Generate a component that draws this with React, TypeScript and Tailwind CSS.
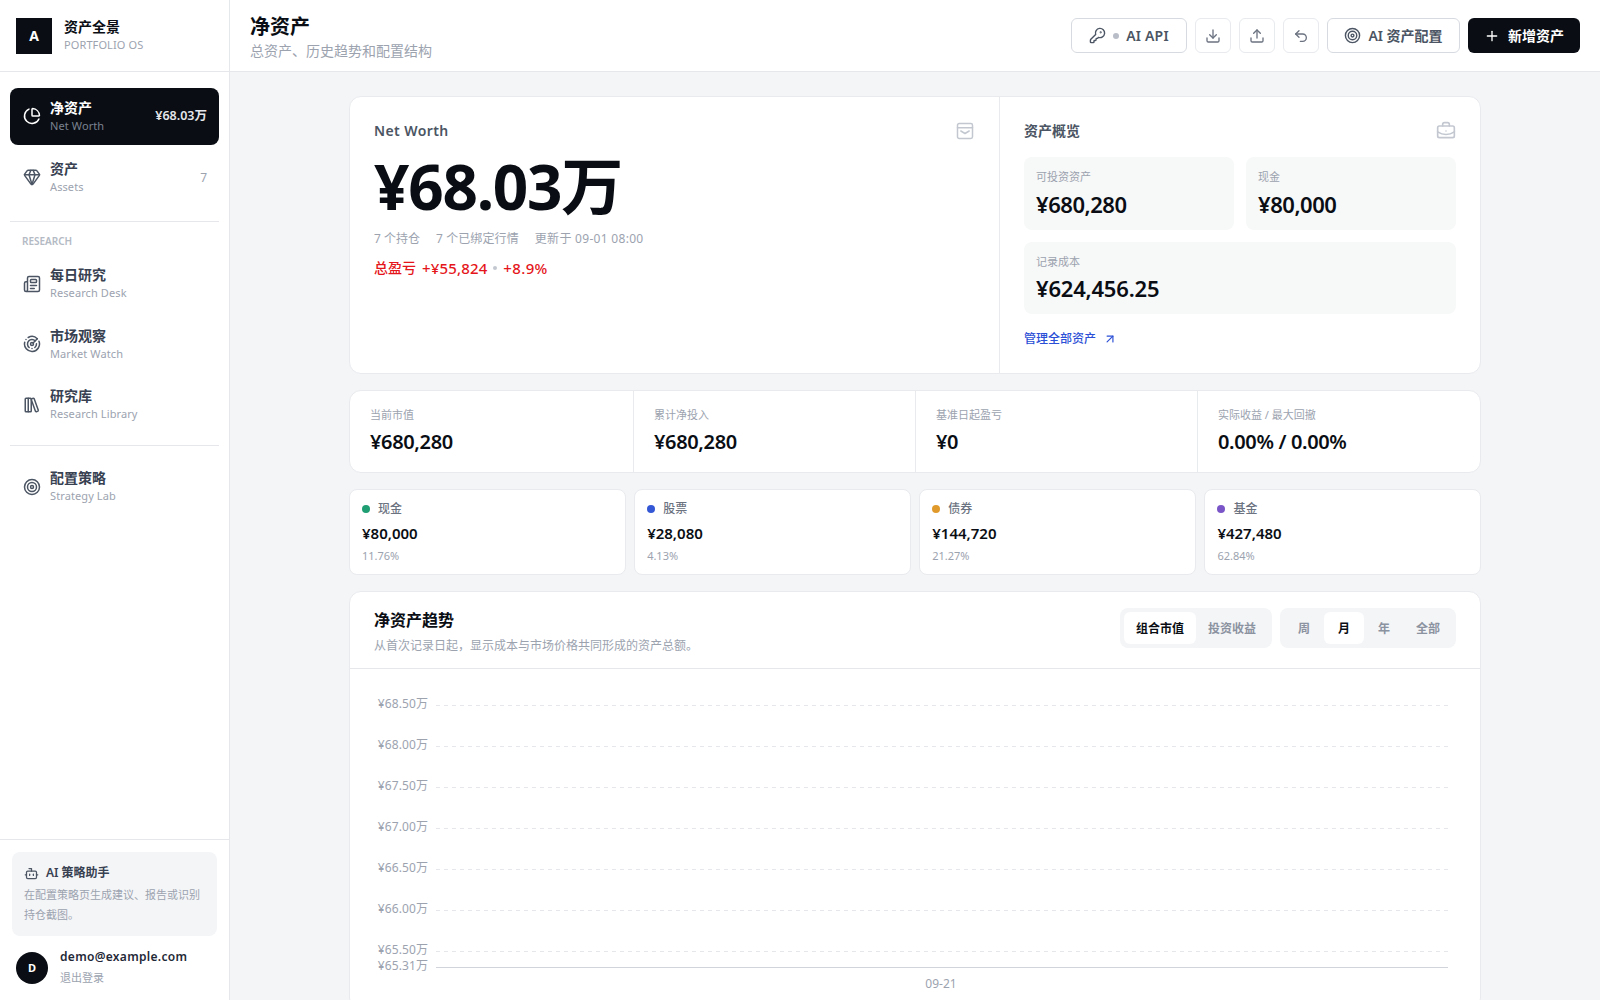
import {
  ArrowUpRight,
  Bot,
  BriefcaseBusiness,
  ChartPie,
  Download,
  Gem,
  KeyRound,
  LibraryBig,
  Newspaper,
  Plus,
  Radar,
  Target,
  Undo2,
  Upload,
} from 'lucide-react';
import type { ReactNode } from 'react';

const font = 'font-["Noto_Sans","Noto_Sans_CJK_SC",sans-serif]';

function NavRow({
  icon,
  title,
  sub,
  right,
  active,
}: {
  icon: ReactNode;
  title: string;
  sub: string;
  right?: string;
  active?: boolean;
}) {
  return (
    <div
      className={`flex h-[57px] items-center rounded-lg pl-[12.5px] pr-3 ${active ? 'bg-[#0a0e14] text-white' : 'text-[#4b5563]'}`}
    >
      <span className="-mt-px flex w-[18px] justify-center">{icon}</span>
      <div className="ml-[9.5px] flex-1">
        <div className={`text-sm leading-[18px] font-semibold ${active ? 'text-white' : 'text-[#374151]'}`}>{title}</div>
        <div className={`text-[11px] leading-[18px] tracking-[0.1px] ${active ? 'text-[#7b8190]' : 'text-[#9ca3af]'}`}>{sub}</div>
      </div>
      {right && (
        <span className={active ? 'text-[12.5px] font-semibold text-[#e5e7eb]' : 'text-xs text-[#9ca3af]'}>{right}</span>
      )}
    </div>
  );
}

function Sidebar() {
  return (
    <aside className="flex h-full w-[230px] shrink-0 flex-col border-r border-[#e5e7eb] bg-white">
      <div className="flex h-[72px] shrink-0 items-center border-b border-[#e5e7eb] pl-4">
        <div className="flex h-9 w-9 items-center justify-center bg-[#0a0e14] text-sm font-bold text-white">A</div>
        <div className="ml-3 pt-px">
          <div className="text-sm leading-[18px] font-semibold text-[#0a0e14]">资产全景</div>
          <div className="text-[11px] leading-[18px] tracking-[0.1px] text-[#9ca3af]">PORTFOLIO OS</div>
        </div>
      </div>
      <nav className="flex flex-1 flex-col px-[10px] pt-4">
        <div className="flex flex-col gap-1">
          <NavRow active icon={<ChartPie size={18} />} title="净资产" sub="Net Worth" right="¥68.03万" />
          <NavRow icon={<Gem size={18} />} title="资产" sub="Assets" right="7" />
        </div>
        <div className="mt-[14.5px] border-t border-[#e5e7eb]" />
        <div className="mt-[11px] mb-[7px] pl-3 text-[10px] leading-4 font-semibold text-[#b4bac4]">RESEARCH</div>
        <div className="flex flex-col gap-[3.5px]">
          <NavRow icon={<Newspaper size={18} />} title="每日研究" sub="Research Desk" />
          <NavRow icon={<Radar size={18} />} title="市场观察" sub="Market Watch" />
          <NavRow icon={<LibraryBig size={18} />} title="研究库" sub="Research Library" />
        </div>
        <div className="mt-[11px] border-t border-[#e5e7eb]" />
        <div className="mt-[13px]">
          <NavRow icon={<Target size={18} />} title="配置策略" sub="Strategy Lab" />
        </div>
      </nav>
      <div className="border-t border-[#e5e7eb] px-3 pt-3 pb-4">
        <div className="h-[84px] rounded-lg bg-[#f4f5f7] px-3 pt-3">
          <div className="flex items-center gap-[7px] text-xs leading-[18px] font-semibold text-[#374151]">
            <Bot size={15} className="text-[#4b5563]" />
            AI 策略助手
          </div>
          <p className="mt-[3px] text-[11px] leading-5 text-[#9ca3af]">在配置策略页生成建议、报告或识别持仓截图。</p>
        </div>
        <div className="mt-4 flex h-8 items-center pl-1">
          <div className="flex h-8 w-8 items-center justify-center rounded-full bg-[#0a0e14] text-[11px] font-bold text-white">D</div>
          <div className="-mt-[3px] ml-3">
            <div className="text-xs leading-[18px] font-semibold tracking-[0.3px] text-[#1f2937]">demo@example.com</div>
            <div className="mt-1 text-[11px] leading-4 text-[#9ca3af]">退出登录</div>
          </div>
        </div>
      </div>
    </aside>
  );
}

function Header() {
  const outline = 'flex h-[35px] items-center rounded-md border border-[#d7dbe1] bg-white text-sm font-semibold text-[#4b5563]';
  const iconBtn = 'flex h-[35px] w-9 items-center justify-center rounded-md border border-[#e8eaee] bg-white text-[#6b7280]';
  return (
    <header className="flex h-[72px] shrink-0 items-center justify-between border-b border-[#e5e7eb] bg-white pr-5 pl-5">
      <div className="pt-[2px]">
        <h1 className="text-xl leading-7 font-semibold text-[#0a0e14]">净资产</h1>
        <p className="text-sm leading-5 text-[#9ca3af]">总资产、历史趋势和配置结构</p>
      </div>
      <div className="flex items-center gap-2">
        <button className={`${outline} w-[116px] justify-center gap-[7px] tracking-[0.2px]`}>
          <KeyRound size={17} />
          <span className="h-[6px] w-[6px] rounded-full bg-[#b8bdc7]" />
          AI API
        </button>
        <button className={iconBtn}><Download size={16} /></button>
        <button className={iconBtn}><Upload size={16} /></button>
        <button className={iconBtn}><Undo2 size={16} /></button>
        <button className={`${outline} w-[133px] justify-center gap-[7px]`}>
          <Target size={17} />
          AI 资产配置
        </button>
        <button className="flex h-[35px] w-[112px] items-center justify-center gap-2 rounded-md bg-[#0a0e14] text-sm font-semibold text-white">
          <Plus size={16} />
          新增资产
        </button>
      </div>
    </header>
  );
}

function Tile({ label, value, tight }: { label: string; value: string; tight?: boolean }) {
  return (
    <div className={`rounded-lg bg-[#f7f8f8] px-3 pt-[11px] ${tight ? 'h-[72px]' : 'h-[73px]'}`}>
      <div className="text-[11px] leading-[18px] text-[#9ca3af]">{label}</div>
      <div className={`${tight ? 'mt-[2px] tracking-[-0.2px]' : 'mt-[3px] tracking-[-0.45px]'} text-[22px] leading-[30px] font-semibold text-[#0a0e14]`}>{value}</div>
    </div>
  );
}

function Hero() {
  return (
    <section className="grid h-[278px] grid-cols-[650px_1fr] rounded-xl border border-[#e8eaee] bg-white">
      <div className="border-r border-[#e8eaee] px-6 pt-6">
        <div className="flex items-center justify-between">
          <span className="text-sm leading-5 font-semibold tracking-[0.4px] text-[#4b5563]">Net Worth</span>
          <svg width="20" height="20" viewBox="0 0 24 24" fill="none" stroke="#c3c8d0" strokeWidth="1.8" strokeLinejoin="round" strokeLinecap="round">
            <rect x="3" y="3" width="18" height="18" rx="2" />
            <path d="M3 8h18" />
            <path d="M7 12l5 3 5-3" />
          </svg>
        </div>
        <div className="mt-[10px] text-[62px] leading-[70px] font-bold tracking-[-0.02em] text-[#0a0e14]">¥68.03万</div>
        <div className="mt-2 flex gap-4 text-xs leading-5 text-[#9ca3af]">
          <span>7 个持仓</span>
          <span className="tracking-[0.1px]">7 个已绑定行情</span>
          <span className="tracking-[0.3px]">更新于 09-01 08:00</span>
        </div>
        <div className="mt-[9px] flex items-center text-sm leading-5 font-medium text-[#e5161b]">
          <span>总盈亏</span>
          <span className="ml-[6px] text-[15px] tracking-[0.15px]">+¥55,824</span>
          <span className="mx-[6px] h-1 w-1 rounded-full bg-[#c3c8d0]" />
          <span className="text-[15px] tracking-[0.35px]">+8.9%</span>
        </div>
      </div>
      <div className="px-6 pt-6">
        <div className="flex items-center justify-between">
          <span className="text-sm leading-5 font-semibold text-[#4b5563]">资产概览</span>
          <BriefcaseBusiness size={20} className="text-[#c3c8d0]" />
        </div>
        <div className="mt-4 grid grid-cols-2 gap-3">
          <Tile label="可投资资产" value="¥680,280" />
          <Tile label="现金" value="¥80,000" />
          <div className="col-span-2">
            <Tile tight label="记录成本" value="¥624,456.25" />
          </div>
        </div>
        <div className="mt-[15px] flex items-center gap-[7px] text-xs leading-5 font-medium text-[#2b4fd6]">
          管理全部资产
          <ArrowUpRight size={14} />
        </div>
      </div>
    </section>
  );
}

const stats = [
  { label: '当前市值', value: '¥680,280' },
  { label: '累计净投入', value: '¥680,280' },
  { label: '基准日起盈亏', value: '¥0' },
  { label: '实际收益 / 最大回撤', value: '0.00% / 0.00%' },
];

const cats = [
  { label: '现金', value: '¥80,000', pct: '11.76%', dot: 'bg-[#1f9d73]' },
  { label: '股票', value: '¥28,080', pct: '4.13%', dot: 'bg-[#3457d5]' },
  { label: '债券', value: '¥144,720', pct: '21.27%', dot: 'bg-[#e09a2b]' },
  { label: '基金', value: '¥427,480', pct: '62.84%', dot: 'bg-[#7a55c7]' },
];

function Segment({ items, active, wide }: { items: string[]; active: string; wide?: boolean }) {
  return (
    <div className="flex h-10 items-center rounded-lg bg-[#f4f5f7] p-1">
      {items.map((item) => (
        <span
          key={item}
          className={`flex h-8 items-center justify-center rounded-md px-3 pt-px text-xs font-semibold ${wide ? '' : 'min-w-10'} ${item === active ? 'bg-white text-[#0a0e14]' : 'text-[#8b92a0]'}`}
        >
          {item}
        </span>
      ))}
    </div>
  );
}

const ticks = [
  { y: 36, label: '¥68.50万' },
  { y: 77, label: '¥68.00万' },
  { y: 118, label: '¥67.50万' },
  { y: 159, label: '¥67.00万' },
  { y: 200, label: '¥66.50万' },
  { y: 241, label: '¥66.00万' },
  { y: 282, label: '¥65.50万' },
];

function Chart() {
  return (
    <svg width="1130" height="340" className="block">
      {ticks.map((t) => (
        <g key={t.label}>
          <line x1="86" x2="1098" y1={t.y + 0.5} y2={t.y + 0.5} stroke="#e5e7eb" strokeDasharray="4 4" />
          <text x="78" y={t.y + 3} textAnchor="end" fontSize="12" letterSpacing="0.1" fill="#9ca3af">{t.label}</text>
        </g>
      ))}
      <line x1="86" x2="1098" y1="298.5" y2="298.5" stroke="#d1d5db" />
      <text x="78" y="301" textAnchor="end" fontSize="12" letterSpacing="0.1" fill="#9ca3af">¥65.31万</text>
      <text x="591" y="319" textAnchor="middle" fontSize="12" fill="#9ca3af">09-21</text>
    </svg>
  );
}

export default function App() {
  return (
    <div className={`flex h-screen overflow-hidden bg-[#f4f5f7] ${font}`}>
      <Sidebar />
      <div className="flex min-w-0 flex-1 flex-col">
        <Header />
        <main className="flex-1 overflow-hidden px-6 pt-6">
          <div className="mx-auto flex max-w-[1132px] flex-col">
            <Hero />
            <section className="mt-4 grid h-[83px] grid-cols-[284px_282px_282px_1fr] divide-x divide-[#e8eaee] rounded-xl border border-[#e8eaee] bg-white">
              {stats.map((s) => (
                <div key={s.label} className="px-5 pt-[15px]">
                  <div className="text-[11px] leading-[18px] text-[#9ca3af]">{s.label}</div>
                  <div className="mt-1 text-xl leading-7 font-semibold tracking-[-0.35px] text-[#0a0e14]">{s.value}</div>
                </div>
              ))}
            </section>
            <section className="mt-4 grid grid-cols-4 gap-[8.5px]">
              {cats.map((c) => (
                <div key={c.label} className="h-[86px] rounded-lg border border-[#e8eaee] bg-white px-3 pt-[9px]">
                  <div className="flex items-center gap-2 text-xs leading-[20px] font-medium text-[#6b7280]">
                    <span className={`h-2 w-2 rounded-full ${c.dot}`} />
                    {c.label}
                  </div>
                  <div className="mt-[3px] text-[15px] leading-[22px] font-semibold text-[#0a0e14]">{c.value}</div>
                  <div className="mt-1 text-[11px] leading-4 text-[#9ca3af]">{c.pct}</div>
                </div>
              ))}
            </section>
            <section className="mt-4 rounded-xl border border-[#e8eaee] bg-white">
              <div className="flex h-[77px] items-start justify-between border-b border-[#e5e7eb] px-6 pt-4">
                <div>
                  <h2 className="text-base leading-6 font-semibold text-[#0a0e14]">净资产趋势</h2>
                  <p className="mt-1 text-xs leading-5 text-[#9ca3af]">从首次记录日起，显示成本与市场价格共同形成的资产总额。</p>
                </div>
                <div className="flex gap-2">
                  <Segment wide items={['组合市值', '投资收益']} active="组合市值" />
                  <Segment items={['周', '月', '年', '全部']} active="月" />
                </div>
              </div>
              <Chart />
            </section>
          </div>
        </main>
      </div>
    </div>
  );
}
